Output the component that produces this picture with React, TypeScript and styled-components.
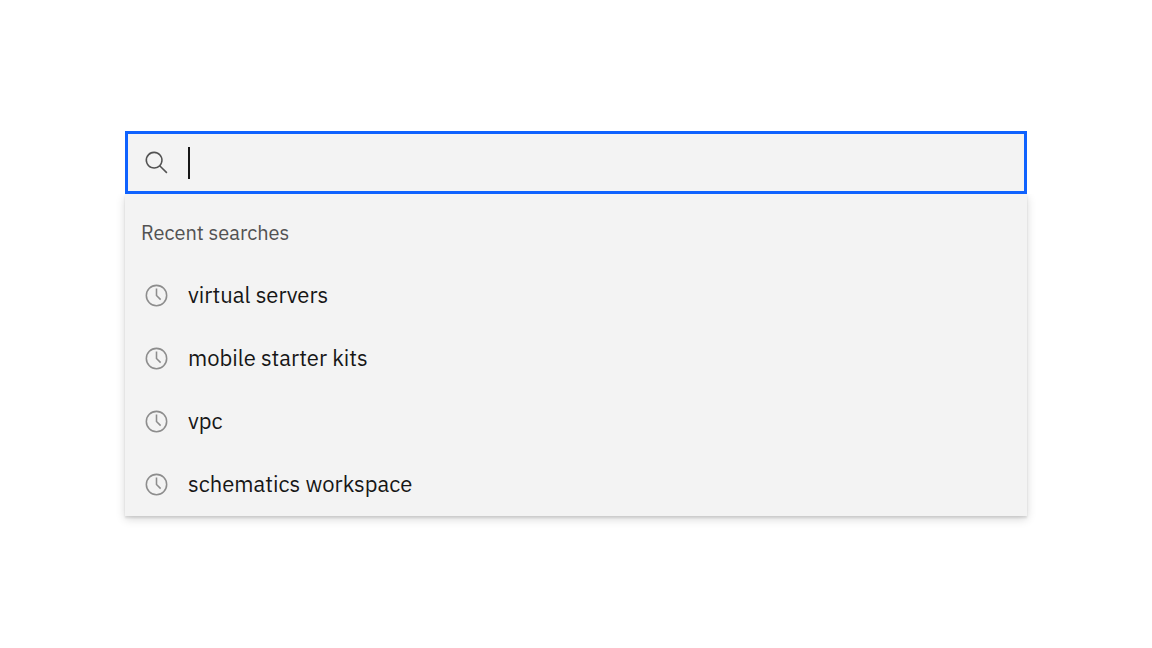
import React from "react";
import styled, { createGlobalStyle } from "styled-components";

const GlobalStyle = createGlobalStyle`
  *, *::before, *::after { box-sizing: border-box; }
  body {
    margin: 0;
    background: #ffffff;
    color: #161616;
    font-family: "IBM Plex Sans", Roboto, "Liberation Sans", sans-serif;
  }
`;

const Page = styled.main`
  padding: 131px 125px 40px;
`;

const SearchField = styled.label`
  display: flex;
  align-items: center;
  height: 63px;
  padding: 0 16px;
  border: 3px solid #0f62fe;
  background: #f3f3f3;
`;

const IconSlot = styled.span<{ $tone: string }>`
  display: flex;
  flex: none;
  width: 25px;
  height: 25px;
  margin-right: 19px;
  color: ${(p) => p.$tone};

  svg {
    width: 100%;
    height: 100%;
    fill: currentColor;
  }
`;

const Caret = styled.span`
  flex: none;
  width: 2px;
  height: 32px;
  background: #161616;
`;

const SearchInput = styled.input`
  flex: 1;
  min-width: 0;
  height: 100%;
  padding: 0;
  border: 0;
  outline: 0;
  background: transparent;
  color: inherit;
  caret-color: transparent;
  font: inherit;
  font-size: 22px;
`;

const Panel = styled.section`
  padding-top: 8px;
  background: #f3f3f3;
  box-shadow: 0 3px 9px rgba(0, 0, 0, 0.16), 0 2px 2px rgba(0, 0, 0, 0.1);
  clip-path: inset(0 -12px -16px -12px);
`;

const Heading = styled.h2`
  margin: 0;
  padding: 0 16px;
  color: #525252;
  font-size: 20px;
  font-weight: 400;
  line-height: 62px;
`;

const List = styled.ul`
  margin: 0;
  padding: 0;
  list-style: none;
`;

const Suggestion = styled.button`
  display: flex;
  align-items: center;
  width: 100%;
  height: 63px;
  padding: 0 19px 1px;
  border: 0;
  background: transparent;
  color: inherit;
  font: inherit;
  font-size: 22px;
  line-height: 32px;
  text-align: left;
  cursor: pointer;
`;

const recentSearches = [
  "virtual servers",
  "mobile starter kits",
  "vpc",
  "schematics workspace",
];

function SearchIcon() {
  return (
    <svg viewBox="0 0 16 16" aria-hidden="true">
      <path d="M15 14.3 10.7 10A5.5 5.5 0 1 0 10 10.7L14.3 15ZM6.5 11A4.5 4.5 0 1 1 11 6.5 4.5 4.5 0 0 1 6.5 11Z" />
    </svg>
  );
}

function TimeIcon() {
  return (
    <svg viewBox="0 0 32 32" aria-hidden="true">
      <path d="M16 30a14 14 0 1 1 14-14 14 14 0 0 1-14 14Zm0-26a12 12 0 1 0 12 12A12 12 0 0 0 16 4Z" />
      <path d="M20.59 22 15 16.41V7h2v8.58l5 5.01Z" />
    </svg>
  );
}

export default function App() {
  return (
    <>
      <GlobalStyle />
      <Page>
        <SearchField>
          <IconSlot $tone="#525252">
            <SearchIcon />
          </IconSlot>
          <Caret />
          <SearchInput type="text" aria-label="Search" autoComplete="off" />
        </SearchField>
        <Panel>
          <Heading>Recent searches</Heading>
          <List>
            {recentSearches.map((term) => (
              <li key={term}>
                <Suggestion type="button">
                  <IconSlot $tone="#8d8d8d">
                    <TimeIcon />
                  </IconSlot>
                  {term}
                </Suggestion>
              </li>
            ))}
          </List>
        </Panel>
      </Page>
    </>
  );
}
